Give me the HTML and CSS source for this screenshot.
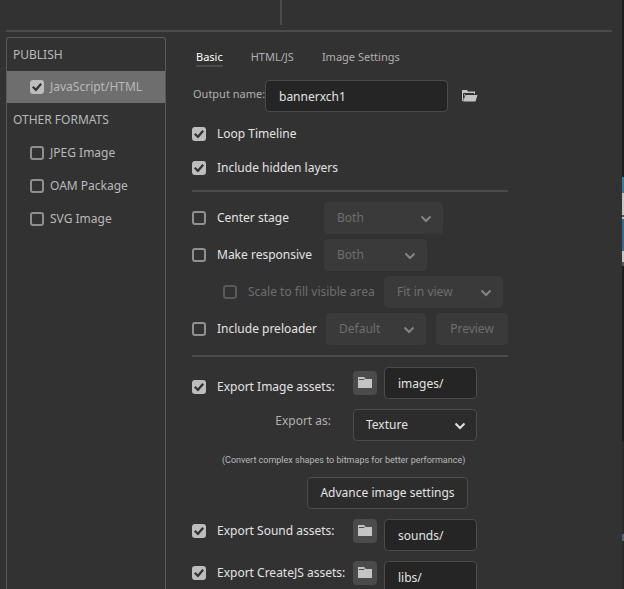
FILE: index.html
```html
<!DOCTYPE html>
<html lang="en">
<head>
  <meta charset="utf-8">
  <meta name="viewport" content="width=device-width, initial-scale=1.0">
  <title>Publish Settings</title>
  <link rel="stylesheet" href="styles.css">
</head>
<body>

  <div class="dialog">
    <header class="topbar"></header>

    <div class="columns">
      <aside class="formats">
        <h2>PUBLISH</h2>
        <label class="format selected"><input type="checkbox" checked> JavaScript/HTML</label>
        <h2>OTHER FORMATS</h2>
        <label class="format"><input type="checkbox"> JPEG Image</label>
        <label class="format"><input type="checkbox"> OAM Package</label>
        <label class="format"><input type="checkbox"> SVG Image</label>
      </aside>

      <main class="settings">
        <nav class="tabs">
          <a href="#basic" class="active">Basic</a>
          <a href="#html">HTML/JS</a>
          <a href="#image">Image Settings</a>
        </nav>

        <div class="output">
          <label for="output">Output name:</label>
          <input type="text" id="output" value="bannerxch1">
          <button class="browse" aria-label="Browse">
            <svg width="16" height="12" viewBox="0 0 16 12">
              <path d="M0 0h5l1 1.500h7V4H3L1 10v1H0z" fill="#c4c4c4"/>
              <path d="M3.500 5H15.500L13.500 11.500H1z" fill="#c4c4c4"/>
              <path d="M1.500 8V3.500H12" fill="none" stroke="#323232"/>
            </svg>
          </button>
        </div>

        <div class="toggles">
          <label class="check"><input type="checkbox" checked> Loop Timeline</label>
          <label class="check"><input type="checkbox" checked> Include hidden layers</label>
        </div>

        <hr>

        <div class="stage">
          <div class="row">
            <label class="check stage-label"><input type="checkbox"> Center stage</label>
            <span class="select wide">
              <select disabled aria-label="Center stage"><option>Both</option></select>
              <svg width="12" height="8" viewBox="0 0 12 8"><path d="M1.500 1.500L6 6l4.500-4.500"/></svg>
            </span>
          </div>
          <div class="row">
            <label class="check stage-label"><input type="checkbox"> Make responsive</label>
            <span class="select narrow">
              <select disabled aria-label="Make responsive"><option>Both</option></select>
              <svg width="12" height="8" viewBox="0 0 12 8"><path d="M1.500 1.500L6 6l4.500-4.500"/></svg>
            </span>
          </div>
          <div class="row scale">
            <label class="check scale-label"><input type="checkbox" disabled> Scale to fill visible area</label>
            <span class="select wide">
              <select disabled aria-label="Scale mode"><option>Fit in view</option></select>
              <svg width="12" height="8" viewBox="0 0 12 8"><path d="M1.500 1.500L6 6l4.500-4.500"/></svg>
            </span>
          </div>
          <div class="row">
            <label class="check preloader-label"><input type="checkbox"> Include preloader</label>
            <span class="select preloader">
              <select disabled aria-label="Preloader"><option>Default</option></select>
              <svg width="12" height="8" viewBox="0 0 12 8"><path d="M1.500 1.500L6 6l4.500-4.500"/></svg>
            </span>
            <button class="btn preview" disabled>Preview</button>
          </div>
        </div>

        <hr>

        <div class="assets">
          <div class="asset first">
            <label class="check"><input type="checkbox" checked> Export Image assets:</label>
            <button class="folder" aria-label="Image folder">
              <svg width="14" height="12" viewBox="0 0 14 12"><path d="M0 0h6l2 2h6v9H0z" fill="#c4c4c4"/><path d="M1 2.500h5l1-1" fill="none" stroke="#4b4b4b"/></svg>
            </button>
            <input type="text" value="images/" aria-label="Image path">
          </div>
          <div class="asset">
            <label class="export-as" for="export-as">Export as:</label>
            <span class="select enabled">
              <select id="export-as"><option>Texture</option></select>
              <svg width="12" height="8" viewBox="0 0 12 8"><path d="M1.500 1.500L6 6l4.500-4.500"/></svg>
            </span>
          </div>
          <p class="hint">(Convert complex shapes to bitmaps for better performance)</p>
          <button class="btn advance">Advance image settings</button>
          <div class="asset">
            <label class="check"><input type="checkbox" checked> Export Sound assets:</label>
            <button class="folder" aria-label="Sound folder">
              <svg width="14" height="12" viewBox="0 0 14 12"><path d="M0 0h6l2 2h6v9H0z" fill="#c4c4c4"/><path d="M1 2.500h5l1-1" fill="none" stroke="#4b4b4b"/></svg>
            </button>
            <input type="text" value="sounds/" aria-label="Sound path">
          </div>
          <div class="asset">
            <label class="check"><input type="checkbox" checked> Export CreateJS assets:</label>
            <button class="folder" aria-label="Library folder">
              <svg width="14" height="12" viewBox="0 0 14 12"><path d="M0 0h6l2 2h6v9H0z" fill="#c4c4c4"/><path d="M1 2.500h5l1-1" fill="none" stroke="#4b4b4b"/></svg>
            </button>
            <input type="text" value="libs/" aria-label="Library path">
          </div>
        </div>
      </main>
    </div>
  </div>

  <div class="backdrop"></div>

</body>
</html>
```
FILE: styles.css
```css
* {
  box-sizing: border-box;
}

body {
  margin: 0;
  height: 100vh;
  display: flex;
  overflow: hidden;
  background: #323232;
  color: #e3e3e3;
  font-family: "Noto Sans", sans-serif;
  font-size: 12px;
  line-height: 16px;
}

input, select, button {
  font: inherit;
  color: inherit;
  margin: 0;
}

.dialog {
  flex: 1;
  display: flex;
  flex-direction: column;
  padding: 0 10px 0 6px;
}

/* what shows of the app behind the dialog */
.backdrop {
  width: 2px;
  background: linear-gradient(#1f1f1f 177px, #3a7ca0 177px 193px, #c9c6c4 193px 215px, #555 215px 217px, #c9c6c4 217px 219px, #2f6f95 219px 251px, #c9c6c4 251px 262px, #4d5c58 262px 266px, #1f1f1f 266px 441px, #2b2b2b 441px 534px, #56607a 534px 541px, #2b2b2b 541px);
}

.topbar {
  height: 32px;
  flex-shrink: 0;
  border-bottom: 2px solid #4b4b4b;
}

.topbar::before {
  content: "";
  display: block;
  width: 2px;
  height: 25px;
  margin-left: 274px;
  background: #4b4b4b;
}

.columns {
  flex: 1;
  min-height: 0;
  display: flex;
  gap: 26px;
  padding-top: 5px;
}

/* sidebar */
.formats {
  width: 160px;
  flex-shrink: 0;
  border: 1px solid #5a5a5a;
  border-bottom: none;
  border-radius: 3px 3px 0 0;
  color: #b9b9b9;
}

.formats h2 {
  margin: 0;
  padding-left: 6px;
  font-size: 12px;
  font-weight: 400;
  line-height: 33px;
}

.format {
  display: flex;
  align-items: center;
  gap: 6px;
  height: 33px;
  padding-left: 23px;
}

.format.selected {
  height: 32px;
  background: #6e6e6e;
}

/* check boxes */
input[type="checkbox"] {
  appearance: none;
  width: 14px;
  height: 14px;
  flex-shrink: 0;
  border: 2px solid #8f8f8f;
  border-radius: 3px;
}

input[type="checkbox"]:checked {
  background: #bdbdbd;
  border-color: #bdbdbd;
}

input[type="checkbox"]:checked::before {
  content: "";
  display: block;
  width: 10px;
  height: 10px;
  background: #323232;
  clip-path: polygon(0 55%, 15% 40%, 38% 62%, 83% 10%, 100% 24%, 40% 94%);
}

input[type="checkbox"]:disabled {
  border-color: #5a5a5a;
}

.check {
  display: flex;
  align-items: center;
  gap: 11px;
  white-space: nowrap;
}

/* settings column */
.settings {
  flex: 1;
  max-width: 316px;
}

.tabs {
  display: flex;
  gap: 28px;
  padding: 12px 4px;
  font-size: 11px;
}

.tabs a {
  color: #b0b0b0;
  text-decoration: none;
  border-bottom: 2px solid transparent;
}

.tabs a.active {
  color: #fff;
  border-color: #4b4b4b;
}

.output {
  display: flex;
  align-items: flex-start;
  height: 32px;
  margin-top: 1px;
}

.output label {
  width: 73px;
  padding-left: 1px;
  font-size: 11px;
  line-height: 28px;
  color: #b0b0b0;
  white-space: nowrap;
}

input[type="text"] {
  min-width: 0;
  height: 32px;
  padding: 0 13px;
  border: 1px solid #4b4b4b;
  border-radius: 4px;
  background: #252525;
}

.output input {
  width: 183px;
}

.browse {
  height: 32px;
  padding: 0;
  margin-left: 14px;
  border: none;
  background: none;
  display: flex;
  align-items: center;
}

.toggles {
  display: grid;
  gap: 18px;
  padding: 14px 0;
}

hr {
  height: 2px;
  margin: 0;
  border: none;
  background: #4b4b4b;
}

.stage {
  display: flex;
  flex-direction: column;
  gap: 5px;
  padding: 10px 0;
}

.row {
  display: flex;
  align-items: center;
}

.stage-label {
  width: 132px;
}

.preloader-label {
  width: 134px;
}

.scale {
  padding-left: 31px;
  color: #6e6e6e;
}

.scale-label {
  width: 161px;
}

/* drop-downs */
.select {
  position: relative;
  height: 32px;
  color: #6e6e6e;
}

.select select {
  appearance: none;
  width: 100%;
  height: 32px;
  padding: 0 12px;
  border: 1px solid #3a3a3a;
  border-radius: 4px;
  background: #3a3a3a;
  opacity: 1;
}

.select svg {
  position: absolute;
  right: 11px;
  top: 13px;
  fill: none;
  stroke: #858585;
  stroke-width: 2;
  pointer-events: none;
}

.wide {
  width: 119px;
}

.narrow {
  width: 103px;
}

.preloader {
  width: 100px;
}

.enabled {
  width: 124px;
  color: #e3e3e3;
}

.select.enabled select {
  border-color: #4b4b4b;
  background: #2c2c2c;
}

.enabled svg {
  stroke: #e3e3e3;
}

.btn {
  height: 32px;
  padding: 0 12px;
  border: 1px solid #4b4b4b;
  border-radius: 4px;
  background: #2c2c2c;
  white-space: nowrap;
}

.preview {
  width: 72px;
  margin-left: auto;
  border-color: #3a3a3a;
  background: #3a3a3a;
  color: #6e6e6e;
}

/* export paths */
.assets {
  display: flex;
  flex-direction: column;
  gap: 10px;
  padding-top: 10px;
}

.asset {
  display: flex;
  align-items: flex-start;
}

.asset label {
  width: 161px;
  height: 24px;
  line-height: 24px;
}

.asset.first {
  align-items: center;
}

.asset.first label {
  align-self: flex-end;
}

.asset .export-as {
  padding-right: 22px;
  text-align: right;
  color: #b0b0b0;
}

.asset input[type="text"] {
  width: 93px;
}

.folder {
  width: 24px;
  height: 24px;
  padding: 0;
  margin-right: 7px;
  border: none;
  border-radius: 4px;
  background: #4b4b4b;
  display: grid;
  place-items: center;
}

.hint {
  margin: 0;
  padding-left: 30px;
  font-family: Roboto, sans-serif;
  font-size: 9px;
  line-height: 18px;
  height: 16px;
  color: #b9b9b9;
}

.advance {
  width: 161px;
  margin-left: 115px;
}
```
